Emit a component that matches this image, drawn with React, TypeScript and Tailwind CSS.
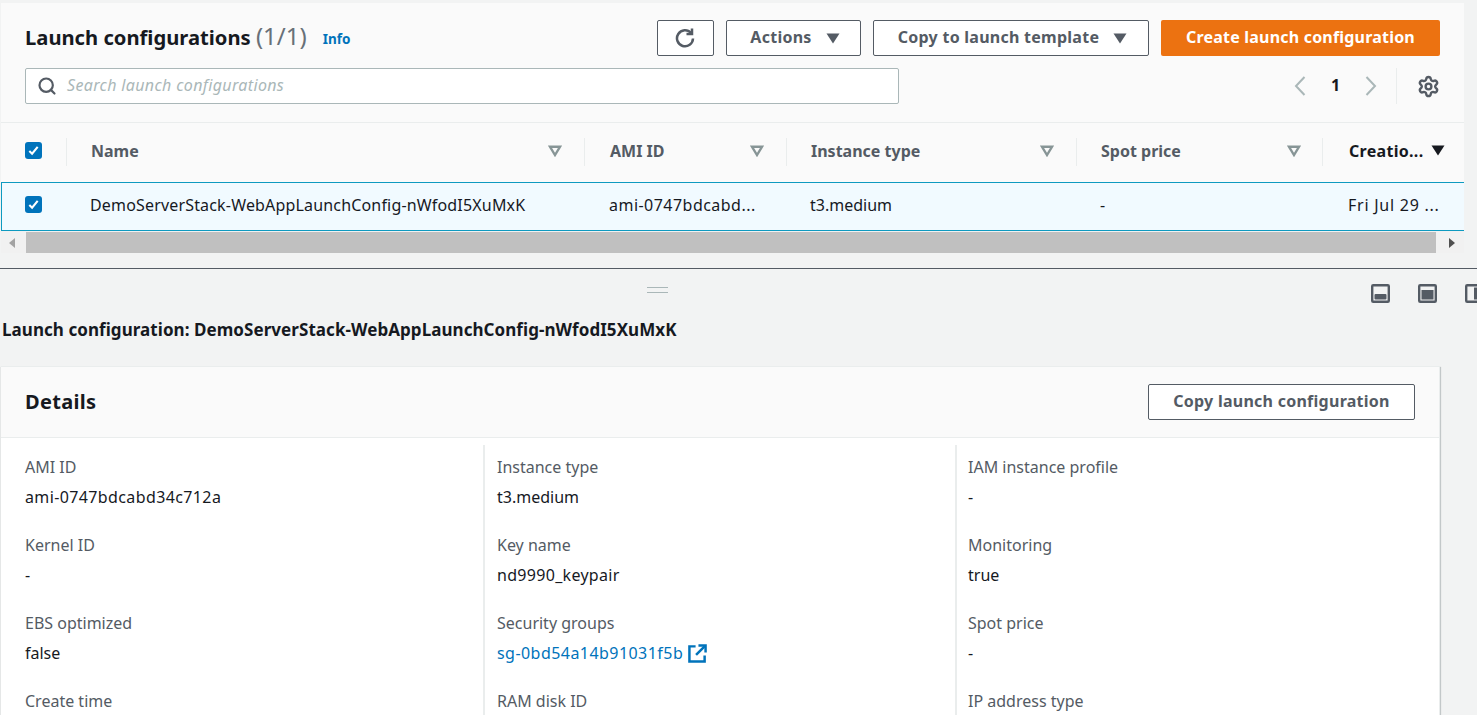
import { Search, Settings } from "lucide-react";
import type { ReactNode } from "react";

const FONT = "font-['Noto_Sans','Open_Sans',sans-serif]";

function Caret({ className = "" }: { className?: string }) {
  return (
    <svg viewBox="0 0 14 11" className={`h-[11px] w-[14px] ${className}`}>
      <path d="M0.5 0.5h13L7 10.5z" fill="currentColor" />
    </svg>
  );
}

function SortIcon() {
  return (
    <svg viewBox="0 0 14 12" className="h-[12px] w-[14px] text-[#879596]">
      <path d="M2 1.8h10L7 10z" fill="none" stroke="currentColor" strokeWidth="2.4" />
    </svg>
  );
}

function Check() {
  return (
    <span className="flex h-[17px] w-[17px] items-center justify-center rounded-[3px] bg-[#0073bb]">
      <svg viewBox="0 0 14 14" className="h-[13px] w-[13px]">
        <path d="M2.5 7.5l3 3 6-7.5" fill="none" stroke="#fff" strokeWidth="2.2" />
      </svg>
    </span>
  );
}

function PanelIcon({ fill }: { fill: "bottom" | "full" | "side" }) {
  return (
    <svg viewBox="0 0 19 19" className="h-[19px] w-[19px] shrink-0">
      <rect x="1.2" y="1.2" width="16.6" height="16.6" rx="1" fill="none" stroke="#545b64" strokeWidth="2.4" />
      {fill === "bottom" && <rect x="3.5" y="10" width="12" height="5.5" rx="1" fill="#545b64" />}
      {fill === "full" && <rect x="3.5" y="6" width="12" height="9.5" fill="#545b64" />}
      {fill === "side" && <rect x="9" y="3.5" width="7" height="12" fill="#545b64" />}
    </svg>
  );
}

function RefreshIcon() {
  return (
    <svg viewBox="0 0 20 20" className="mr-px h-5 w-5 text-[#545b64]" fill="none" stroke="currentColor" strokeWidth="2.5">
      <path d="M16 5A8 8 0 1 0 18 10.5" />
      <path d="M17 0.5V6h-5.5" />
    </svg>
  );
}

function ExternalIcon() {
  return (
    <svg viewBox="0 0 20 20" className="h-[19px] w-[19px]" fill="none" stroke="currentColor" strokeWidth="2.6">
      <path d="M8 2.5H1.5v16h16V12" />
      <path d="M11 1.5h7.5V9" />
      <path d="M18 2l-9.5 9.5" />
    </svg>
  );
}

function Chevron({ dir }: { dir: "left" | "right" }) {
  return (
    <svg viewBox="0 0 12 20" className="h-5 w-3 text-[#aab7b8]" fill="none" stroke="currentColor" strokeWidth="2">
      <path d={dir === "left" ? "M10.5 1L2 10l8.5 9" : "M1.5 1L10 10l-8.5 9"} />
    </svg>
  );
}

function HeadCell({ label, width, pad }: { label: string; width: string; pad: string }) {
  return (
    <div className={`relative flex items-center justify-between ${width} ${pad}`}>
      <span className="text-[16px] font-bold text-[#545b64]">{label}</span>
      <SortIcon />
      <span className="absolute right-0 top-[15px] h-7 w-px bg-[#eaeded]" />
    </div>
  );
}

function Field({ label, children }: { label: string; children?: ReactNode }) {
  return (
    <div className="h-[78px]">
      <div className="text-[16px] leading-[22px] text-[#545b64]">{label}</div>
      {children && <div className="mt-[8px] text-[16px] leading-[22px] text-[#16191f]">{children}</div>}
    </div>
  );
}

function OutlineButton({ children, width }: { children: ReactNode; width: string }) {
  return (
    <button
      type="button"
      className={`flex h-9 items-center justify-center gap-[14px] rounded-[2px] border border-[#545b64] bg-white text-[16px] font-bold tracking-[0.26px] text-[#545b64] ${width}`}
    >
      {children}
    </button>
  );
}

export default function App() {
  return (
    <div className={`h-[715px] w-[1477px] overflow-hidden bg-[#f2f3f3] text-[#16191f] ${FONT}`}>
      <div className="pl-px pt-[3px]">
        <div className="w-[1463px] bg-white">
          {/* Header */}
          <div className="h-[120px] border-b border-[#eaeded] bg-[#fafafa] pl-[24px] pr-[24px] pt-[17px]">
            <div className="flex h-9 items-center">
              <h1 className="mb-[3px] text-[20.2px] font-bold leading-7">
                Launch configurations{" "}
                <span className="text-[24px] font-normal text-[#687078]">(1/1)</span>
              </h1>
              <a className="ml-[16px] mt-[3px] text-[13.5px] font-bold text-[#0073bb]">Info</a>
              <div className="ml-auto flex gap-3">
                <OutlineButton width="w-[57px]">
                  <RefreshIcon />
                </OutlineButton>
                <OutlineButton width="w-[135px]">
                  <span className="mb-[2px] ml-[3px]">Actions</span> <Caret />
                </OutlineButton>
                <OutlineButton width="w-[276px]">
                  <span className="mb-[2px] ml-[3px]">Copy to launch template</span> <Caret />
                </OutlineButton>
                <button
                  type="button"
                  className="h-9 w-[279px] rounded-[2px] bg-[#ec7211] pb-[2px] text-[16px] font-bold tracking-[0.2px] text-white"
                >
                  Create launch configuration
                </button>
              </div>
            </div>
            <div className="mt-3 flex items-center">
              <div className="flex h-9 w-[874px] items-center gap-[10px] rounded-[2px] border border-[#aab7b8] bg-white pl-[11px]">
                <Search size={20} strokeWidth={2.6} className="text-[#545b64]" />
                <span className="mb-[2px] text-[16px] italic tracking-[0.35px] text-[#aab7b8]">
                  Search launch configurations
                </span>
              </div>
              <div className="ml-auto flex items-center">
                <Chevron dir="left" />
                <span className="mx-[25px] mb-[3px] w-[9px] text-center text-[16px] font-bold">1</span>
                <Chevron dir="right" />
                <span className="ml-[19px] mr-[20px] h-9 w-px bg-[#eaeded]" />
                <Settings size={23} strokeWidth={2.5} className="text-[#545b64]" />
              </div>
            </div>
          </div>

          {/* Table head */}
          <div className="flex h-[59px] bg-[#fafafa] pb-[4px]">
            <div className="relative flex w-[66px] items-center pl-[24px]">
              <Check />
              <span className="absolute right-0 top-[15px] h-7 w-px bg-[#eaeded]" />
            </div>
            <HeadCell label="Name" width="w-[518px]" pad="pl-[24px] pr-[23px]" />
            <HeadCell label="AMI ID" width="w-[202px]" pad="pl-[25px] pr-[23px]" />
            <HeadCell label="Instance type" width="w-[290px]" pad="pl-[24px] pr-[23px]" />
            <HeadCell label="Spot price" width="w-[246px]" pad="pl-[24px] pr-[22px]" />
            <div className="flex w-[141px] items-center gap-[8px] pl-[26px]">
              <span className="text-[16px] font-bold tracking-[0.3px]">Creatio...</span>
              <Caret className="text-[#16191f]" />
            </div>
          </div>

          {/* Selected row */}
          <div className="flex h-[49px] items-center border-y border-l border-[#0e9ac0] bg-[#f1faff] pb-[4px] text-[16px]">
            <div className="w-[65px] pl-[23px]">
              <Check />
            </div>
            <div className="w-[518px] pl-[23px] tracking-[0.17px]">
              DemoServerStack-WebAppLaunchConfig-nWfodI5XuMxK
            </div>
            <div className="w-[202px] pl-[24px] tracking-[0.47px]">ami-0747bdcabd...</div>
            <div className="w-[290px] pl-[23px]">t3.medium</div>
            <div className="w-[246px] pl-[23px]">-</div>
            <div className="pl-[25px] tracking-[0.75px]">Fri Jul 29 ...</div>
          </div>
        </div>

        {/* Horizontal scrollbar */}
        <div className="flex h-[22px] w-[1463px] items-center bg-[#f1f1f1] pt-[1px]">
          <span className="ml-[8px] mr-[11px] h-0 w-0 shrink-0 border-y-[5px] border-r-[6px] border-y-transparent border-r-[#a3a3a3]" />
          <div className="h-[21px] w-[1410px] shrink-0 bg-[#c0c0c0]" />
          <span className="ml-[13px] h-0 w-0 shrink-0 border-y-[5px] border-l-[6px] border-y-transparent border-l-[#505050]" />
        </div>
      </div>

      <div className="mt-[15px] border-t border-[#545b64]">
        <div className="flex h-[50px] w-[1490px] items-start">
          <div className="ml-[647px] mt-[18px] h-[6px] w-[21px] shrink-0 border-y border-[#aab7b8]" />
          <div className="ml-[703px] mt-[15px] flex shrink-0 gap-[28px]">
            <PanelIcon fill="bottom" />
            <PanelIcon fill="full" />
            <PanelIcon fill="side" />
          </div>
        </div>

        <div className="pl-[2px] text-[17px] font-bold leading-[22px] tracking-[0.06px] whitespace-nowrap">
          Launch configuration: DemoServerStack-WebAppLaunchConfig-nWfodI5XuMxK
        </div>

        {/* Details card */}
        <div className="ml-px mt-[25px] w-[1439px] border-t border-r border-[#eaeded] bg-white shadow-[0_1px_1px_0_rgba(0,28,36,0.3),1px_1px_1px_0_rgba(0,28,36,0.15)]">
          <div className="flex h-[71px] items-center justify-between border-b border-[#eaeded] bg-[#fafafa] pl-[24px] pr-[24px]">
            <h2 className="text-[20px] font-bold tracking-[0.3px]">Details</h2>
            <OutlineButton width="w-[267px]">
              <span className="mb-[2px]">Copy launch configuration</span>
            </OutlineButton>
          </div>
          <div className="grid grid-cols-[482px_472px_1fr] pt-[7px]">
            <div className="pl-[24px] pt-[11px]">
              <Field label="AMI ID">
                <span className="tracking-[0.38px]">ami-0747bdcabd34c712a</span>
              </Field>
              <Field label="Kernel ID">-</Field>
              <Field label="EBS optimized">false</Field>
              <Field label="Create time" />
            </div>
            <div className="border-l-2 border-[#eaeded] pl-[12px] pt-[11px]">
              <Field label="Instance type">t3.medium</Field>
              <Field label="Key name">
                <span className="tracking-[0.3px]">nd9990_keypair</span>
              </Field>
              <Field label="Security groups">
                <a className="flex items-center gap-[5px] tracking-[0.45px] text-[#0073bb]">
                  sg-0bd54a14b91031f5b
                  <ExternalIcon />
                </a>
              </Field>
              <Field label="RAM disk ID" />
            </div>
            <div className="border-l-2 border-[#eaeded] pl-[11px] pt-[11px]">
              <Field label="IAM instance profile">-</Field>
              <Field label="Monitoring">true</Field>
              <Field label="Spot price">-</Field>
              <Field label="IP address type" />
            </div>
          </div>
        </div>
      </div>
    </div>
  );
}
